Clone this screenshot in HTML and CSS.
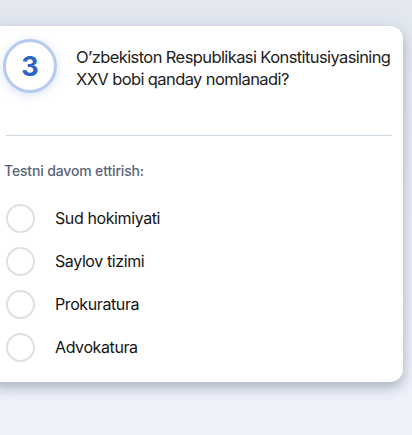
FILE: index.html
```html
<!DOCTYPE html>
<html lang="uz">
<head>
<meta charset="utf-8">
<link rel="stylesheet" href="styles.css">
</head>
<body>
<main class="page">
  <section class="card">
    <div class="question">
      <div class="badge">3</div>
      <p class="question-text">O’zbekiston Respublikasi Konstitusiyasining<br>XXV bobi qanday nomlanadi?</p>
    </div>
    <hr class="divider">
    <div class="prompt">Testni davom ettirish:</div>
    <ul class="options">
      <li class="option"><span class="radio"></span><span class="label">Sud hokimiyati</span></li>
      <li class="option"><span class="radio"></span><span class="label">Saylov tizimi</span></li>
      <li class="option"><span class="radio"></span><span class="label">Prokuratura</span></li>
      <li class="option"><span class="radio"></span><span class="label">Advokatura</span></li>
    </ul>
  </section>
</main>
</body>
</html>
```
FILE: styles.css
```css
* { box-sizing: border-box; }
html, body { margin: 0; padding: 0; }
body {
  width: 412px;
  height: 435px;
  overflow: hidden;
  background: linear-gradient(180deg, #e3e8f0 0%, #e9edf5 40%, #eef2fb 100%);
  font-family: Inter, "Noto Sans", sans-serif;
  color: #1a1a1a;
}
.page {
  padding-top: 26px;
}
.card {
  margin-left: -12px;
  width: 415px;
  background: #fff;
  border-radius: 13px;
  box-shadow: 0 6px 12px rgba(80, 90, 110, 0.35), 0 0 20px rgba(120, 135, 165, 0.15);
  padding: 13px 4px 20px 14px;
}
.question {
  display: flex;
  align-items: flex-start;
  gap: 19px;
  padding-left: 1px;
}
.badge {
  flex: none;
  width: 54px;
  height: 54px;
  border-radius: 50%;
  border: 3.5px solid #b5caef;
  background: #fff;
  box-shadow: 0 2px 10px rgba(120, 150, 210, 0.3);
  display: flex;
  align-items: center;
  justify-content: center;
  font-weight: 700;
  font-size: 27px;
  color: #2c64c4;
}
.question-text {
  flex: 1 1 auto;
  min-width: 0;
  margin: 7px -12px 0 0;
  font-size: 16.5px;
  line-height: 22px;
  letter-spacing: -0.6px;
  color: #222;
}
.divider {
  border: 0;
  height: 1px;
  background: #c9dae2;
  margin: 42px 0 0 4px;
  width: 386px;
}
.prompt {
  margin-top: 25px;
  padding-left: 2px;
  font-size: 14px;
  font-weight: 500;
  letter-spacing: -0.15px;
  line-height: 20px;
  color: #5a6377;
}
.options {
  list-style: none;
  margin: 22px 0 0;
  padding: 0 0 0 4px;
  display: flex;
  flex-direction: column;
  gap: 13px;
}
.option {
  display: flex;
  align-items: center;
  gap: 20px;
  height: 30px;
}
.radio {
  flex: none;
  width: 29px;
  height: 29px;
  border-radius: 50%;
  border: 2.5px solid #e0e0e0;
  background: #fff;
}
.label {
  font-size: 16px;
  letter-spacing: -0.4px;
  color: #141414;
}
```
